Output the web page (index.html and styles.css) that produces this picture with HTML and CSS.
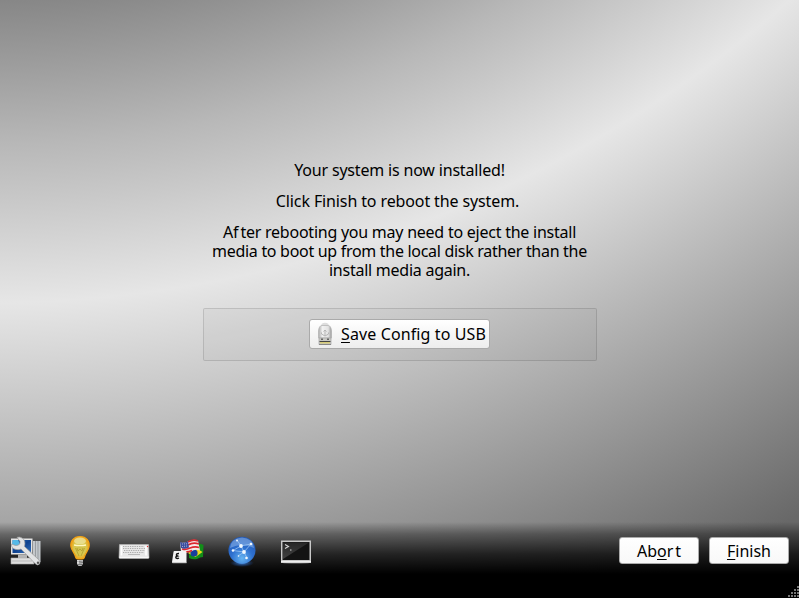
FILE: index.html
```html
<!DOCTYPE html>
<html lang="en">
<head>
<meta charset="utf-8">
<title>Installer</title>
<link rel="stylesheet" href="styles.css">
</head>
<body>
<div class="screen">
  <main class="content">
    <p class="title">Your system is now installed!</p>
    <p class="hint">Click Finish to reboot the system.</p>
    <p class="note"><span class="l1">A<span class="loose">f</span>ter rebooting you may need to eject the install</span><span class="l2">media to boot up from the local disk rather than the</span><span class="l3">install media again.</span></p>
    <section class="group">
      <button class="save">
        <svg width="16" height="24" viewBox="0 0 16 24">
          <defs><linearGradient id="stick"><stop offset="0" stop-color="#aaa"/><stop offset=".3" stop-color="#f2f2f2"/><stop offset=".75" stop-color="#e2e2e2"/><stop offset="1" stop-color="#999"/></linearGradient></defs>
          <path d="M4.500 4V2q3.500-2.500 7 0v2z" fill="#ddd"/>
          <path d="M1.500 16V9Q2 3.500 5 3.500h6Q14 3.500 14.500 9v7z" fill="url(#stick)" stroke="#b0b0b0" stroke-width=".7"/>
          <path d="M8 8v6M4.500 10.500v1.500L8 14l3.500-2v-1.500M6.500 9.500 8 8l1.500 1.500" fill="none" stroke="#b5b5b5"/>
          <path d="M2 16h12v6.500H2z" fill="#c9c9c4" stroke="#aaa" stroke-width=".8"/>
          <path d="M4 16.500h2V18H4zM10 16.500h2V18h-2z" fill="#666"/>
          <path d="M2.500 19h11v1h-11z" fill="#444"/><path d="M3 20h10v1.500H3z" fill="#d6cb78"/><path d="M2 22h12v1H2z" fill="#888"/>
        </svg>
        <span class="label"><u>S</u>ave Config to USB</span>
      </button>
    </section>
  </main>
  <footer class="bar">
    <nav class="tools">
      <svg width="32" height="32" viewBox="0 0 32 32">
        <defs><linearGradient id="scr" x2="1" y2="1"><stop offset="0" stop-color="#2a6fb4"/><stop offset=".5" stop-color="#0f4290"/><stop offset="1" stop-color="#3471bd"/></linearGradient></defs>
        <path d="M23 6h7.500v21H23z" fill="#c4c8cc"/><path d="M25.500 6v20M28 6v20" stroke="#85898d" stroke-width=".7"/>
        <path d="M1 3.500h21.500v16H1z" fill="#e4e4e4"/><path d="M2.500 5h18.500v13H2.500z" fill="url(#scr)"/>
        <path d="M8 19.500h9V23H8z" fill="#b5b5b5"/><path d="M1 23h22l1 6H1z" fill="#dedede" stroke="#aaa" stroke-width=".6"/><path d="M2 26h20" stroke="#bbb"/>
        <path d="M3 5h5l2 4-4 4-4-4z" fill="#55b9e8"/>
        <path d="M1.500 9q-.5 4.500 4.500 5.500 3 .5 5-.5L25 28.500q2.500 2.500 4.500.5 1.500-2-1-4.500L14.500 11.500Q16 5 12 3 10 1.500 7 2.300l3 4.200q.5 4-4.500 4z" fill="#e2e3e4" stroke="#999" stroke-width=".7"/>
        <circle cx="28" cy="27.800" r="1.200" fill="#555"/>
      </svg>
      <svg width="32" height="32" viewBox="0 0 32 32">
        <defs><radialGradient id="bulb"><stop offset="0" stop-color="#cfc04c"/><stop offset=".65" stop-color="#d6c84f"/><stop offset="1" stop-color="#eea51d"/></radialGradient></defs>
        <path d="M16 1.500C9.500 1.500 6 6.500 7 12c.8 4 4 6 4.700 10.500q.3 1.500 2 1.500h4.600q1.700 0 2-1.500C21 18 24.200 16 25 12c1-5.500-2.500-10.500-9-10.500z" fill="url(#bulb)" stroke="#f3a315" stroke-width="1.200"/>
        <ellipse cx="16" cy="6" rx="6" ry="3.500" fill="#eee4a0" opacity=".75"/>
        <path d="M10 10q6 1.200 12 0" fill="none" stroke="#fff7c0" stroke-width="1.300"/>
        <path d="m11.500 13 3.500 8M20.500 13 17 21M13 13l1 3 2-2 2 2 1-3" fill="none" stroke="#b09e30" stroke-width=".8"/>
        <path d="M13 25h6v4l-1.500 2h-3L13 29z" fill="#bbb"/><path d="m13 26.500 6 .8M13 29l6 .5" stroke="#666"/>
        <path d="M14 25v4" stroke="#fff"/>
      </svg>
      <svg width="32" height="32" viewBox="0 0 32 32">
        <path d="M1.500 9.500h29l.5 13q0 1-1 1H2q-1 0-1-1z" fill="#e8e8e8" stroke="#bbb" stroke-width=".6"/>
        <path d="M3.500 11v9.500M28 11v9.500" stroke="#fff" stroke-width="1.500"/>
        <path d="M5 11.500h21M5 13.500h22M6 15.500h21M5 17.500h21" stroke="#ababab" stroke-width="1" stroke-dasharray="1.300 1"/>
        <path d="M10 19.500h12" stroke="#b8b8b8"/><path d="M1.500 22.300h29" stroke="#fafafa"/><circle cx="29.500" cy="11.500" r=".7" fill="#d33"/>
      </svg>
      <svg width="32" height="32" viewBox="0 0 32 32">
        <path d="M17 12q5-2 8-3 3-1 6.500 1L31 22q-3 0-6 2-4 1-8-1z" fill="#128d19"/>
        <path d="m16 18 8-5 6.500 4-7 5z" fill="#edda20"/><circle cx="22" cy="18" r="3.600" fill="#173f9c"/>
        <path d="M8 7.500q5 1 8-1 5-3 10-1l2 10q-5-2-9 1-5 2-10 0z" fill="#f5eaea"/>
        <path d="M16 7q5-3 10-1M16 10q5-3 11-1M10 14q4 1 8-1 5-2 9-.5M11 16.500q5 1 9-1" fill="none" stroke="#dc282e" stroke-width="1.700"/>
        <path d="M8 7q4 1.500 8-.5l1 6q-4 2-8 .5z" fill="#394d9e"/><path d="m10 9 6-.2M10 11.500l6-.6" stroke="#a6b4dd" stroke-dasharray="1 1"/>
        <path d="M2.500 16h11q1 0 1 1v10q0 1-1 1H1q-1 0-1-1l1.500-10q0-1 1-1z" fill="#f4f4f4"/><path d="M.5 27h14v1.200H.5z" fill="#ccc"/>
        <path d="M7 18.500q-3-.2-2.500 2l1 .5q-2.200.5-1.500 2 1.200 1 3 0" fill="none" stroke="#111" stroke-width="1.400"/>
      </svg>
      <svg width="32" height="32" viewBox="0 0 32 32">
        <defs><radialGradient id="globe" cx=".5" cy=".8" r=".8"><stop offset="0" stop-color="#65b4f2"/><stop offset=".5" stop-color="#2e70cf"/><stop offset="1" stop-color="#2459b4"/></radialGradient><radialGradient id="glow"><stop offset="0" stop-color="#4388e0"/><stop offset="1" stop-color="#1a4a9c" stop-opacity="0"/></radialGradient></defs>
        <ellipse cx="16" cy="28" rx="12" ry="4" fill="url(#glow)"/><circle cx="16" cy="15.300" r="13.500" fill="url(#globe)"/>
        <path d="M4 13Q5 3.500 16 2.500q11 1 12 10.500-12-6-24 0z" fill="#b7d6fb" opacity=".4"/>
        <path d="m7 15.500 8-4.500 10-2M15 11l-4-6M15 11l3 6-11-1.500M18 17l7-8M18 17l-6 4M18 17l3 6" fill="none" stroke="#a7cdf7" stroke-width=".7"/>
        <g fill="#f2f9ff"><circle cx="15" cy="11" r="1.900"/><circle cx="18" cy="17" r="1.900"/><circle cx="7" cy="15.500" r="1.300"/><circle cx="25" cy="9" r="1.300"/><circle cx="20.500" cy="23" r="1.300"/><circle cx="11" cy="5.500" r=".9"/><circle cx="12.500" cy="21" r=".8"/></g>
      </svg>
      <svg width="32" height="32" viewBox="0 0 32 32">
        <defs><linearGradient id="term" x2="0" y2="1"><stop offset="0" stop-color="#333"/><stop offset="1" stop-color="#5a5a5a"/></linearGradient></defs>
        <ellipse cx="16" cy="28" rx="13" ry="1" fill="#444"/>
        <path d="M1 5.500h30v22H1z" fill="#c8c8c8"/><path d="M1 26h30v1.800H1z" fill="#ededed"/>
        <path d="M2.500 7h27v18h-27z" fill="#131313"/><path d="M3 7.500h26L3 24z" fill="url(#term)" opacity=".65"/>
        <path d="m5 9.500 3.500 2L5 13.500M10 15h1.500" fill="none" stroke="#d8d8d8" stroke-width="1.100"/>
      </svg>
    </nav>
    <div class="actions">
      <button class="btn"><span>Ab<u>o</u><span class="loose">r</span>t</span></button>
      <button class="btn"><span><u>F</u>inish</span></button>
    </div>
  </footer>
  <svg class="grip" width="12" height="12" viewBox="0 0 12 12"><path d="M10 1h2M7 4h2M10 4h2M4 7h2M7 7h2M10 7h2M1 10h2M4 10h2M7 10h2M10 10h2" stroke="#777" stroke-width="2"/></svg>
</div>
</body>
</html>
```
FILE: styles.css
```css
* { box-sizing: border-box; }
body { margin: 0; overflow: hidden; font: 16px/19px "Noto Sans", "Open Sans", sans-serif; color: #000; }
.screen {
  position: relative;
  width: 799px;
  height: 598px;
  display: flex;
  flex-direction: column;
  background: radial-gradient(circle at -14px -915px, #858585 910px, #b8b8b8 1060px, #e6e6e6 1218px, #b0b0b0 1400px, #686868 1645px);
}
.content { flex: 1; display: flex; flex-direction: column; align-items: center; padding-top: 161px; }
p { margin: 0 0 12px; text-align: center; white-space: nowrap; }
.title { letter-spacing: -.18px; }
.hint { letter-spacing: -.12px; margin-right: 4px; }
.note span[class^="l"]:not(.loose) { display: block; }
.l1 { letter-spacing: -.24px; }
.l2 { letter-spacing: -.3px; }
.l3 { letter-spacing: -.25px; }
.loose { letter-spacing: 2px; }
.group {
  width: 394px;
  height: 53px;
  margin-top: 16px;
  padding-bottom: 2px;
  display: flex;
  justify-content: center;
  align-items: center;
  border: 1px solid rgba(0, 0, 0, .12);
  border-radius: 2px;
  background: rgba(0, 0, 0, .025);
}
button { font: inherit; color: #000; border: 1px solid #aaa; border-radius: 3px; background: linear-gradient(#fff, #f8f8f8); padding: 0; white-space: nowrap; }
u { text-decoration-thickness: 1px; text-underline-offset: 2px; }
.save { width: 181px; height: 30px; display: flex; align-items: center; gap: 8px; padding-left: 7px; background: linear-gradient(#fff, #ededed); }
.label { letter-spacing: .12px; padding-top: 2px; }
.bar { height: 76px; display: flex; justify-content: space-between; padding: 0 10px; background: linear-gradient(rgba(0,0,0,0), rgba(0,0,0,.36) 12px, rgba(0,0,0,.75) 32px, #000 52px); }
.tools { display: flex; gap: 22px; padding-top: 13px; }
.actions { display: flex; gap: 10px; padding-top: 15px; }
.btn { width: 80px; height: 27px; padding-top: 2px; }
.grip { position: absolute; right: 0; bottom: 0; }
```
